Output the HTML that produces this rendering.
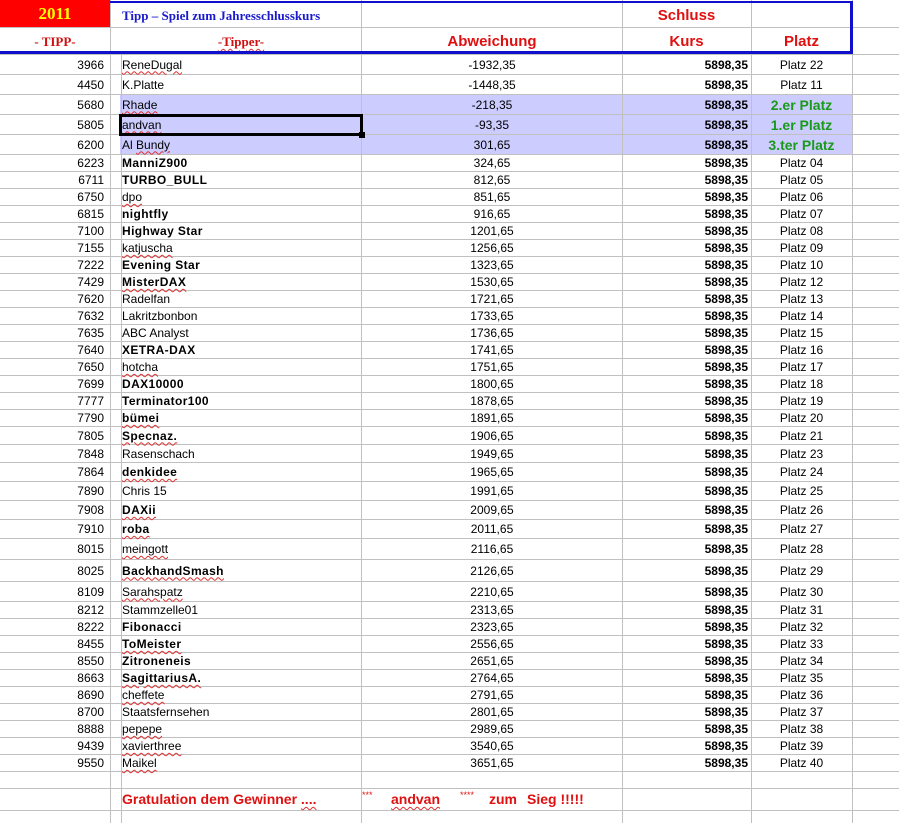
<!DOCTYPE html>
<html><head><meta charset="utf-8"><style>
*{margin:0;padding:0;box-sizing:border-box}
body{width:899px;height:823px;background:#fff;position:relative;overflow:hidden;font-family:"Liberation Sans",Arial,sans-serif;font-size:12px;color:#000}
.v{position:absolute;top:0;height:823px;width:1px;background:#c0c0c0}
.r{position:absolute;left:0;width:899px;border-bottom:1px solid #c0c0c0}
.r div{position:absolute;top:0;height:100%;display:flex;align-items:center;white-space:nowrap}
.a{left:0;width:104px;justify-content:flex-end}
.b{left:122px}
.c{left:362px;width:260px;justify-content:center}
.d{left:622px;width:126px;justify-content:flex-end;font-weight:bold}
.e{left:751px;width:101px;justify-content:center}
.bo{font-weight:bold;letter-spacing:0.4px}
.u{text-decoration:underline wavy #e03030;text-decoration-thickness:1px;text-underline-offset:2px}
.g{color:#1a9a1a;font-weight:bold;font-size:14px}
.hl{position:absolute;left:120px;width:732px;top:95px;height:60px;background:#ccccff}
.gt{position:absolute;top:791px;color:#e01010;font-weight:bold;font-size:14px;white-space:nowrap}
</style></head><body>
<div class="hl"></div>
<div class="v" style="left:110px"></div>
<div class="v" style="left:121px;top:55px;height:768px"></div>
<div class="v" style="left:361px"></div>
<div class="v" style="left:622px"></div>
<div class="v" style="left:751px"></div>
<div class="v" style="left:852px"></div>
<div class="r" style="top:0;height:28px;border-color:#c0c0c0"></div>
<div style="position:absolute;left:0;top:0;width:110px;height:27px;background:#ff0000;color:#ffff00;font:bold 17px 'Liberation Serif',serif;text-align:center;line-height:28px">2011</div>
<div style="position:absolute;left:122px;top:8px;color:#1a1acc;font:bold 13px 'Liberation Serif',serif">Tipp – Spiel zum Jahresschlusskurs</div>
<div style="position:absolute;left:622px;top:7px;width:129px;text-align:center;color:#e01010;font:bold 15px 'Liberation Sans',sans-serif">Schluss</div>
<div style="position:absolute;left:0;top:34px;width:110px;text-align:center;color:#d01010;font:bold 13px 'Liberation Serif',serif">- TIPP-</div>
<div style="position:absolute;left:121px;top:34px;width:240px;text-align:center;color:#d01010;font:bold 13px 'Liberation Serif',serif"><span class="u">-Tipper-</span></div>
<div style="position:absolute;left:362px;top:33px;width:260px;text-align:center;color:#e01010;font:bold 15px 'Liberation Sans',sans-serif">Abweichung</div>
<div style="position:absolute;left:622px;top:33px;width:129px;text-align:center;color:#e01010;font:bold 15px 'Liberation Sans',sans-serif">Kurs</div>
<div style="position:absolute;left:751px;top:33px;width:101px;text-align:center;color:#e01010;font:bold 15px 'Liberation Sans',sans-serif">Platz</div>
<div style="position:absolute;left:110px;top:1px;width:743px;height:2px;background:#1010cc"></div>
<div style="position:absolute;left:0;top:51px;width:853px;height:3px;background:#1010cc"></div>
<div style="position:absolute;left:850px;top:1px;width:3px;height:53px;background:#1010cc"></div>
<div style="position:absolute;left:0;top:54px;width:899px;height:1px;background:#c0c0c0"></div>

<div class="r" style="top:55px;height:20px"><div class="a">3966</div><div class="b"><span class="u">ReneDugal</span></div><div class="c">-1932,35</div><div class="d">5898,35</div><div class="e">Platz 22</div></div>
<div class="r" style="top:75px;height:20px"><div class="a">4450</div><div class="b">K.Platte</div><div class="c">-1448,35</div><div class="d">5898,35</div><div class="e">Platz 11</div></div>
<div class="r" style="top:95px;height:20px"><div class="a">5680</div><div class="b"><span class="u">Rhade</span></div><div class="c">-218,35</div><div class="d">5898,35</div><div class="e g">2.er Platz</div></div>
<div class="r" style="top:115px;height:20px"><div class="a">5805</div><div class="b"><span class="u">andvan</span></div><div class="c">-93,35</div><div class="d">5898,35</div><div class="e g">1.er Platz</div></div>
<div class="r" style="top:135px;height:20px"><div class="a">6200</div><div class="b">Al&nbsp;<span class="u">Bundy</span></div><div class="c">301,65</div><div class="d">5898,35</div><div class="e g">3.ter Platz</div></div>
<div style="position:absolute;left:119px;top:114px;width:244px;height:22px;border:3px solid #000"></div>
<div style="position:absolute;left:359px;top:132px;width:6px;height:6px;background:#000"></div>

<div class="r" style="top:155px;height:17px"><div class="a">6223</div><div class="b bo">ManniZ900</div><div class="c">324,65</div><div class="d">5898,35</div><div class="e">Platz 04</div></div>
<div class="r" style="top:172px;height:17px"><div class="a">6711</div><div class="b bo">TURBO_BULL</div><div class="c">812,65</div><div class="d">5898,35</div><div class="e">Platz 05</div></div>
<div class="r" style="top:189px;height:17px"><div class="a">6750</div><div class="b"><span class="u">dpo</span></div><div class="c">851,65</div><div class="d">5898,35</div><div class="e">Platz 06</div></div>
<div class="r" style="top:206px;height:17px"><div class="a">6815</div><div class="b bo">nightfly</div><div class="c">916,65</div><div class="d">5898,35</div><div class="e">Platz 07</div></div>
<div class="r" style="top:223px;height:17px"><div class="a">7100</div><div class="b bo">Highway Star</div><div class="c">1201,65</div><div class="d">5898,35</div><div class="e">Platz 08</div></div>
<div class="r" style="top:240px;height:17px"><div class="a">7155</div><div class="b"><span class="u">katjuscha</span></div><div class="c">1256,65</div><div class="d">5898,35</div><div class="e">Platz 09</div></div>
<div class="r" style="top:257px;height:17px"><div class="a">7222</div><div class="b bo">Evening Star</div><div class="c">1323,65</div><div class="d">5898,35</div><div class="e">Platz 10</div></div>
<div class="r" style="top:274px;height:17px"><div class="a">7429</div><div class="b bo"><span class="u">MisterDAX</span></div><div class="c">1530,65</div><div class="d">5898,35</div><div class="e">Platz 12</div></div>
<div class="r" style="top:291px;height:17px"><div class="a">7620</div><div class="b">Radelfan</div><div class="c">1721,65</div><div class="d">5898,35</div><div class="e">Platz 13</div></div>
<div class="r" style="top:308px;height:17px"><div class="a">7632</div><div class="b">Lakritzbonbon</div><div class="c">1733,65</div><div class="d">5898,35</div><div class="e">Platz 14</div></div>
<div class="r" style="top:325px;height:17px"><div class="a">7635</div><div class="b">ABC Analyst</div><div class="c">1736,65</div><div class="d">5898,35</div><div class="e">Platz 15</div></div>
<div class="r" style="top:342px;height:17px"><div class="a">7640</div><div class="b bo">XETRA-DAX</div><div class="c">1741,65</div><div class="d">5898,35</div><div class="e">Platz 16</div></div>
<div class="r" style="top:359px;height:17px"><div class="a">7650</div><div class="b"><span class="u">hotcha</span></div><div class="c">1751,65</div><div class="d">5898,35</div><div class="e">Platz 17</div></div>
<div class="r" style="top:376px;height:17px"><div class="a">7699</div><div class="b bo">DAX10000</div><div class="c">1800,65</div><div class="d">5898,35</div><div class="e">Platz 18</div></div>
<div class="r" style="top:393px;height:17px"><div class="a">7777</div><div class="b bo">Terminator100</div><div class="c">1878,65</div><div class="d">5898,35</div><div class="e">Platz 19</div></div>
<div class="r" style="top:410px;height:17px"><div class="a">7790</div><div class="b bo"><span class="u">bümei</span></div><div class="c">1891,65</div><div class="d">5898,35</div><div class="e">Platz 20</div></div>
<div class="r" style="top:427px;height:18px"><div class="a">7805</div><div class="b bo"><span class="u">Specnaz.</span></div><div class="c">1906,65</div><div class="d">5898,35</div><div class="e">Platz 21</div></div>
<div class="r" style="top:445px;height:18px"><div class="a">7848</div><div class="b">Rasenschach</div><div class="c">1949,65</div><div class="d">5898,35</div><div class="e">Platz 23</div></div>
<div class="r" style="top:463px;height:19px"><div class="a">7864</div><div class="b bo"><span class="u">denkidee</span></div><div class="c">1965,65</div><div class="d">5898,35</div><div class="e">Platz 24</div></div>
<div class="r" style="top:482px;height:19px"><div class="a">7890</div><div class="b">Chris 15</div><div class="c">1991,65</div><div class="d">5898,35</div><div class="e">Platz 25</div></div>
<div class="r" style="top:501px;height:19px"><div class="a">7908</div><div class="b bo"><span class="u">DAXii</span></div><div class="c">2009,65</div><div class="d">5898,35</div><div class="e">Platz 26</div></div>
<div class="r" style="top:520px;height:19px"><div class="a">7910</div><div class="b bo"><span class="u">roba</span></div><div class="c">2011,65</div><div class="d">5898,35</div><div class="e">Platz 27</div></div>
<div class="r" style="top:539px;height:21px"><div class="a">8015</div><div class="b"><span class="u">meingott</span></div><div class="c">2116,65</div><div class="d">5898,35</div><div class="e">Platz 28</div></div>
<div class="r" style="top:560px;height:22px"><div class="a">8025</div><div class="b bo"><span class="u">BackhandSmash</span></div><div class="c">2126,65</div><div class="d">5898,35</div><div class="e">Platz 29</div></div>
<div class="r" style="top:582px;height:20px"><div class="a">8109</div><div class="b"><span class="u">Sarahspatz</span></div><div class="c">2210,65</div><div class="d">5898,35</div><div class="e">Platz 30</div></div>
<div class="r" style="top:602px;height:17px"><div class="a">8212</div><div class="b">Stammzelle01</div><div class="c">2313,65</div><div class="d">5898,35</div><div class="e">Platz 31</div></div>
<div class="r" style="top:619px;height:17px"><div class="a">8222</div><div class="b bo">Fibonacci</div><div class="c">2323,65</div><div class="d">5898,35</div><div class="e">Platz 32</div></div>
<div class="r" style="top:636px;height:17px"><div class="a">8455</div><div class="b bo"><span class="u">ToMeister</span></div><div class="c">2556,65</div><div class="d">5898,35</div><div class="e">Platz 33</div></div>
<div class="r" style="top:653px;height:17px"><div class="a">8550</div><div class="b bo">Zitroneneis</div><div class="c">2651,65</div><div class="d">5898,35</div><div class="e">Platz 34</div></div>
<div class="r" style="top:670px;height:17px"><div class="a">8663</div><div class="b bo"><span class="u">SagittariusA.</span></div><div class="c">2764,65</div><div class="d">5898,35</div><div class="e">Platz 35</div></div>
<div class="r" style="top:687px;height:17px"><div class="a">8690</div><div class="b"><span class="u">cheffete</span></div><div class="c">2791,65</div><div class="d">5898,35</div><div class="e">Platz 36</div></div>
<div class="r" style="top:704px;height:17px"><div class="a">8700</div><div class="b">Staatsfernsehen</div><div class="c">2801,65</div><div class="d">5898,35</div><div class="e">Platz 37</div></div>
<div class="r" style="top:721px;height:17px"><div class="a">8888</div><div class="b"><span class="u">pepepe</span></div><div class="c">2989,65</div><div class="d">5898,35</div><div class="e">Platz 38</div></div>
<div class="r" style="top:738px;height:17px"><div class="a">9439</div><div class="b"><span class="u">xavierthree</span></div><div class="c">3540,65</div><div class="d">5898,35</div><div class="e">Platz 39</div></div>
<div class="r" style="top:755px;height:17px"><div class="a">9550</div><div class="b"><span class="u">Maikel</span></div><div class="c">3651,65</div><div class="d">5898,35</div><div class="e">Platz 40</div></div>
<div class="r" style="top:772px;height:17px"></div>
<div class="r" style="top:789px;height:22px"></div>
<div class="gt" style="left:122px">Gratulation dem Gewinner <span class="u">....</span></div>
<div class="gt" style="left:362px;font-size:9px;font-weight:normal;top:790px">***</div>
<div class="gt" style="left:391px"><span class="u">andvan</span></div>
<div class="gt" style="left:460px;font-size:9px;font-weight:normal;top:790px">****</div>
<div class="gt" style="left:489px">zum</div>
<div class="gt" style="left:527px">Sieg !!!!!</div>
</body></html>
